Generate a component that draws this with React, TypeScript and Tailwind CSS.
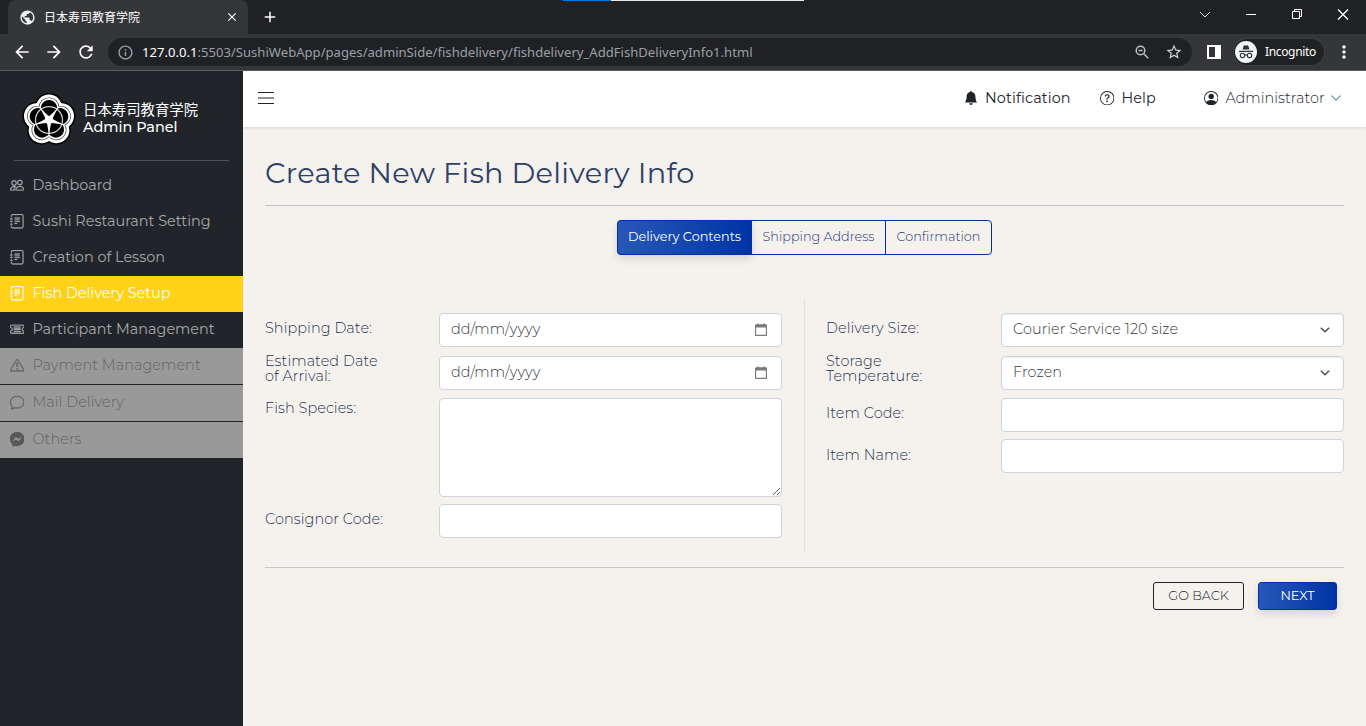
import React from "react";
import {
  BsPeople,
  BsJournalText,
  BsTicketDetailed,
  BsExclamationTriangle,
  BsChat,
  BsMessenger,
  BsBellFill,
  BsQuestionCircle,
  BsPersonCircle,
  BsChevronDown,
} from "react-icons/bs";
import {
  MdArrowBack,
  MdArrowForward,
  MdRefresh,
  MdClose,
  MdAdd,
  MdInfoOutline,
  MdStarOutline,
  MdMoreVert,
  MdPublic,
} from "react-icons/md";

function Incognito() {
  return (
    <svg viewBox="0 0 22 22" className="size-[22px]">
      <circle cx="11" cy="11" r="11" fill="#f1f3f4" />
      <path d="M7.6 8.6 8.7 4.7q.2-.6.8-.4l1.5.4 1.5-.4q.6-.2.8.4l1.1 3.9z" fill="#303134" />
      <path d="M4 10.4h14" stroke="#303134" strokeWidth="1.2" />
      <g fill="none" stroke="#303134" strokeWidth="1.1">
        <circle cx="7.5" cy="14.4" r="2.2" />
        <circle cx="14.5" cy="14.4" r="2.2" />
        <path d="M9.7 14.2q1.3-.8 2.6 0" />
      </g>
    </svg>
  );
}

function BrowserChrome() {
  return (
    <header className="shrink-0 font-['Noto_Sans','Noto_Sans_CJK_JP',sans-serif]">
      <div className="relative flex h-[34px] bg-[#202124]">
        <div className="ml-2 flex h-[34px] w-60 items-center rounded-t-lg bg-[#35363a] pl-3 pr-[10px] text-white">
          <MdPublic className="-ml-px size-[17px] text-[#f1f3f4]" />
          <span className="ml-2 font-['Noto_Sans_CJK_JP',sans-serif] text-[12px]">日本寿司教育学院</span>
          <MdClose className="ml-auto -mr-px size-[14px]" />
        </div>
        <MdAdd className="ml-[13px] mt-2 size-[18px] text-white" />
        <div className="absolute left-[563px] top-0 flex">
          <div className="h-px w-12 bg-[#0078d7]" />
          <div className="h-px w-[193px] bg-[#e6e6e6]" />
        </div>
        <svg viewBox="0 0 160 16" className="ml-auto mr-4 mt-[6px] h-4 w-40" fill="none" stroke="#fff">
          <path d="m10 6 5 5 5-5" stroke="#ddd" />
          <path d="M56 8.500h10M102.500 5.500h7v7h-7zM104.500 5.500v-2h7v7h-2" />
          <path d="M148 3.500l10 10M158 3.500l-10 10" strokeWidth="1.300" />
        </svg>
      </div>
      <div className="flex h-[37px] items-center border-b border-[#5b5c60] bg-[#35363a] text-white">
        <MdArrowBack className="ml-3 size-5" />
        <MdArrowForward className="ml-3 size-5" />
        <MdRefresh className="ml-3 size-5" />
        <div className="ml-3 flex h-7 w-[1084px] items-center rounded-full bg-[#202124] pl-[9px] pr-[9px] text-[#9aa0a6]">
          <MdInfoOutline className="size-[17px]" />
          <span className="ml-2 mt-px whitespace-nowrap text-[13.100px]">
            <span className="text-white">127.0.0.1</span>
            :5503/SushiWebApp/pages/adminSide/fishdelivery/fishdelivery_AddFishDeliveryInfo1.html
          </span>
          <svg viewBox="0 0 14 14" className="ml-auto size-[14px]" fill="none" stroke="#bdc1c6" strokeWidth="1.500">
            <circle cx="5.500" cy="5.500" r="4.300" />
            <path d="M3.500 5.500h4M8.800 8.800l4.400 4.400" />
          </svg>
          <MdStarOutline className="ml-4 size-[18px] text-[#d0d3d6]" />
        </div>
        <svg viewBox="0 0 14 14" className="ml-[15px] size-[14px]">
          <path fill="#fff" fillRule="evenodd" d="M0 0h14v14H0zM2 2v10h6V2z" />
        </svg>
        <div className="ml-[13px] flex h-[26px] w-[90px] items-center rounded-full bg-[#202124] pl-[1px] ring-1 ring-[#3c3d41]">
          <Incognito />
          <span className="ml-2 text-[12px] tracking-[-0.35px]">Incognito</span>
        </div>
        <MdMoreVert className="ml-[10px] size-5" />
      </div>
    </header>
  );
}

const petals = [0, 72, 144, 216, 288];

function Logo() {
  return (
    <svg viewBox="-27 -27 54 54" className="size-[56px] shrink-0">
      {petals.map((a) => (
        <circle key={a} cy="-12.500" r="13.600" fill="#000" transform={`rotate(${a})`} />
      ))}
      {petals.map((a) => (
        <circle key={a} cy="-12.300" r="12.400" fill="#fff" transform={`rotate(${a})`} />
      ))}
      <circle r="20" fill="#fff" />
      {petals.map((a) => (
        <circle key={a} cy="-12" r="9.800" fill="#333" transform={`rotate(${a})`} />
      ))}
      {petals.map((a) => (
        <circle key={a} cy="-12" r="9.200" fill="#fff" transform={`rotate(${a})`} />
      ))}
      {petals.map((a) => (
        <circle key={a} cy="-11.200" r="8" fill="#000" transform={`rotate(${a})`} />
      ))}
      <circle r="13" fill="none" stroke="#ccc" strokeWidth="1.200" />
      {petals.map((a) => (
        <path key={a} d="M0 18 L-.9 9 L-2.500 0 H2.500 L.9 9Z" fill="#fff" transform={`rotate(${a})`} />
      ))}
      <circle r="4" fill="#fff" />
    </svg>
  );
}

function Sidebar() {
  const item = "flex h-9 items-center pl-[10px] text-[14.400px]";
  const live = "text-[#a6a8aa]";
  const off = "bg-[#999999] font-light tracking-[0.09px] text-[#606264]";
  return (
    <aside className="w-[243px] shrink-0 bg-[#212529]">
      <div className="mx-[14px] flex h-[90px] items-center border-b border-[#4d5154] pl-[7px] pt-[9px] text-white">
        <Logo />
        <div className="-mt-[2px] ml-[6px] text-[14.400px] font-medium">
          <div className="h-[17px] font-['Noto_Sans_CJK_JP',sans-serif] font-normal leading-[14px]">日本寿司教育学院</div>
          <div className="h-[17px] leading-[17px]">Admin Panel</div>
        </div>
      </div>
      <nav className="mt-[7px] [&_span]:-mt-px [&_svg]:-mt-px [&_svg]:mr-2 [&_svg]:size-[14.400px] [&_svg]:shrink-0 [&_svg]:stroke-[0.3px]">
        <a className={`${item} ${live}`}><BsPeople /><span>Dashboard</span></a>
        <a className={`${item} ${live}`}><BsJournalText /><span>Sushi Restaurant Setting</span></a>
        <a className={`${item} ${live}`}><BsJournalText /><span>Creation of Lesson</span></a>
        <a className={`${item} bg-[#ffd117] text-white`}><BsJournalText /><span>Fish Delivery Setup</span></a>
        <a className={`${item} ${live}`}><BsTicketDetailed /><span>Participant Management</span></a>
        <a className={`${item} ${off}`}><BsExclamationTriangle /><span>Payment Management</span></a>
        <a className={`${item} ${off} mt-px`}><BsChat /><span>Mail Delivery</span></a>
        <a className={`${item} ${off} mt-px`}><BsMessenger className="text-[#555759]" /><span>Others</span></a>
      </nav>
    </aside>
  );
}

function Topbar() {
  return (
    <div className="relative flex h-14 shrink-0 items-center bg-white pb-[2px] pl-[15px] text-[14.400px] text-[#212529] shadow-[0_1px_3px_rgba(0,0,0,0.12)]">
      <svg viewBox="0 0 16 14" className="h-[14px] w-4">
        <path d="M0 1.500h16M0 12.500h16" stroke="#212529" />
        <path d="M0 7h16" stroke="#90928f" strokeWidth="2" />
      </svg>
      <div className="ml-auto flex w-[136px] items-center">
        <BsBellFill className="size-[14px]" />
        <span className="ml-[7px] mt-[2px] tracking-[0.12px]">Notification</span>
      </div>
      <div className="flex w-[104px] items-center">
        <BsQuestionCircle className="size-[14.400px]" />
        <span className="ml-[7px] mt-[2px] tracking-[0.12px]">Help</span>
      </div>
      <div className="flex w-[162px] items-center">
        <BsPersonCircle className="size-[14.400px]" />
        <span className="ml-[7px] mt-[2px] w-[101px] font-light tracking-[0.06px]">Administrator</span>
        <BsChevronDown className="ml-1 size-3 text-[#1b5a85]" />
      </div>
    </div>
  );
}

const control = "w-[343px] shrink-0 rounded border border-[#ced4da] bg-white";

function DateBox() {
  return (
    <div className={`${control} flex h-[34px] items-center pl-[11px] pr-[14px] text-[14.400px] text-[#343a40]`}>
      <span className="-mt-px tracking-[0.08px]">dd/mm/yyyy</span>
      <svg viewBox="0 0 12 13" className="-mt-px ml-auto h-[13px] w-3">
        <path d="M1.500 2h9q1 0 1 1v8.500q0 1-1 1h-9q-1 0-1-1V3q0-1 1-1z" fill="none" stroke="#7a7a7a" strokeWidth="1.300" />
        <path d="M0 2h12v2.500H0zM2 .5h1.500V3H2zM8.500.5H10V3H8.500z" fill="#7a7a7a" />
      </svg>
    </div>
  );
}

function SelectBox({ children }: { children: React.ReactNode }) {
  return (
    <div className={`${control} flex h-[34px] items-center pl-[11px] pr-[13px] text-[14.400px] tracking-[0.09px] text-[#343a40] shadow-[inset_0_1px_2px_rgba(0,0,0,0.075)]`}>
      {children}
      <BsChevronDown className="ml-auto size-[10px] stroke-[1.5px] text-[#343a40]" />
    </div>
  );
}

function Form() {
  const label = "w-[174px] shrink-0 text-[14.400px] leading-[15px] tracking-[0.09px]";
  const labelWide = "w-[175px] shrink-0 text-[14.400px] leading-[15px] tracking-[0.09px]";
  return (
    <div className="mt-[43px] flex h-[254px] pt-[15px] font-light text-[#27324f]">
      <div className="w-[539px]">
        <div className="flex h-[43px]"><label className={`${label} pt-[8px]`}>Shipping Date:</label><DateBox /></div>
        <div className="flex h-[42px]"><label className={`${label} -mt-[2px]`}>Estimated Date<br />of Arrival:</label><DateBox /></div>
        <div className="flex h-[106px]">
          <label className={`${label} pt-[3px]`}>Fish Species:</label>
          <textarea className={`${control} block h-[99px]`} />
        </div>
        <div className="flex"><label className={`${label} pt-[8px]`}>Consignor Code:</label><div className={`${control} h-[34px]`} /></div>
      </div>
      <div className="-mt-[15px] h-[255px] border-l border-[#dee2e6] pl-[21px] pt-[15px]">
        <div className="flex h-[43px]"><label className={`${labelWide} pt-[8px]`}>Delivery Size:</label><SelectBox><span>Courier Service 120 size</span></SelectBox></div>
        <div className="flex h-[42px]"><label className={`${labelWide} -mt-[2px]`}>Storage<br />Temperature:</label><SelectBox><span>Frozen</span></SelectBox></div>
        <div className="flex h-[41px]"><label className={`${labelWide} pt-[8px]`}>Item Code:</label><div className={`${control} h-[34px]`} /></div>
        <div className="flex"><label className={`${labelWide} pt-[9px]`}>Item Name:</label><div className={`${control} h-[34px]`} /></div>
      </div>
    </div>
  );
}

export default function App() {
  return (
    <div className="flex h-[726px] w-[1366px] flex-col overflow-hidden font-['Montserrat','Inter','Noto_Sans_CJK_JP',sans-serif]">
      <BrowserChrome />
      <div className="flex min-h-0 flex-1">
        <Sidebar />
        <div className="flex min-w-0 flex-1 flex-col bg-[#f5f2ed]">
          <Topbar />
          <main className="pl-[22px] pr-[22px]">
            <h1 className="h-[79px] border-b border-[#c5c5c9] pt-[27px] text-[28.800px] font-normal leading-[38px] tracking-[0.28px] text-[#2d4068]">Create New Fish Delivery Info</h1>
            <div className="ml-[352px] mt-[14px] flex h-[35px] w-[375px] rounded border border-[#0033a0] text-[12.800px] font-light leading-[32px] text-[#24387a]">
              <div className="-m-px w-[135px] rounded-l border border-[#0033a0] bg-linear-to-r from-[#2757b8] to-[#0033a5] text-center font-normal text-white shadow-[0_4px_8px_rgba(0,0,0,0.12)]">Delivery Contents</div>
              <div className="ml-px w-[134px] border-r border-[#0033a0] text-center">Shipping Address</div>
              <div className="flex-1 text-center">Confirmation</div>
            </div>
            <Form />
            <div className="mt-[15px] flex justify-end gap-[14px] border-t border-[#c5c5c9] pr-[7px] pt-[14px] text-[12.800px] leading-[26px]">
              <button className="h-7 w-[91px] rounded-[3px] border border-[#212529] font-light text-[#212529]">GO BACK</button>
              <button className="h-7 w-[79px] rounded-[3px] border border-[#0033a0] bg-linear-to-r from-[#2757b8] to-[#0033a5] text-white shadow-[0_4px_8px_rgba(0,0,0,0.12)]">NEXT</button>
            </div>
          </main>
        </div>
      </div>
    </div>
  );
}
